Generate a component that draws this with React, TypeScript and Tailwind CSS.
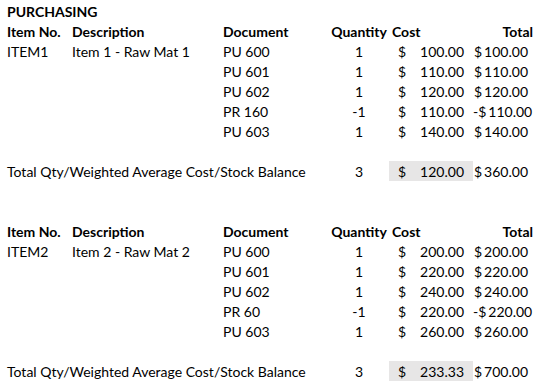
import React from 'react';

type Line = { doc: string; qty: number; cost: string; total: string };
type Item = { no: string; desc: string; lines: Line[]; qty: number; avg: string; total: string };

const items: Item[] = [
  {
    no: 'ITEM1',
    desc: 'Item 1 - Raw Mat 1',
    lines: [
      { doc: 'PU 600', qty: 1, cost: '100.00', total: '$100.00' },
      { doc: 'PU 601', qty: 1, cost: '110.00', total: '$110.00' },
      { doc: 'PU 602', qty: 1, cost: '120.00', total: '$120.00' },
      { doc: 'PR 160', qty: -1, cost: '110.00', total: '-$110.00' },
      { doc: 'PU 603', qty: 1, cost: '140.00', total: '$140.00' },
    ],
    qty: 3,
    avg: '120.00',
    total: '$360.00',
  },
  {
    no: 'ITEM2',
    desc: 'Item 2 - Raw Mat 2',
    lines: [
      { doc: 'PU 600', qty: 1, cost: '200.00', total: '$200.00' },
      { doc: 'PU 601', qty: 1, cost: '220.00', total: '$220.00' },
      { doc: 'PU 602', qty: 1, cost: '240.00', total: '$240.00' },
      { doc: 'PR 60', qty: -1, cost: '220.00', total: '-$220.00' },
      { doc: 'PU 603', qty: 1, cost: '260.00', total: '$260.00' },
    ],
    qty: 3,
    avg: '233.33',
    total: '$700.00',
  },
];

// excel-ish rows: 20px tall, text sits 1px low in the cell
const row =
  'grid grid-cols-[65px_151px_109px_60px_84px_64px] h-[20px] leading-[20px] whitespace-nowrap *:h-[20px] *:pt-[1px]';

function Money({ value }: { value: string }) {
  const neg = value.startsWith('-');
  const num = value.replace('-', '').replace('$', '');
  return (
    <div className="text-right pr-[9px]">
      {neg ? '-' : ''}$<span className="ml-[2px]">{num}</span>
    </div>
  );
}

function CostCell({ value, shaded }: { value: string; shaded?: boolean }) {
  return (
    <div className={`flex justify-between pl-[9px] pr-[9px] ${shaded ? 'bg-[#e7e6e6]' : ''}`}>
      <span>$</span>
      <span>{value}</span>
    </div>
  );
}

function Header() {
  return (
    <div className={`${row} font-bold`}>
      <div className="pl-[3px]">Item No.</div>
      <div className="pl-[3px]">Description</div>
      <div className="pl-[3px]">Document</div>
      <div className="text-center">Quantity</div>
      <div className="pl-[3px]">Cost</div>
      <div className="text-right pr-[4px]">Total</div>
    </div>
  );
}

function Block({ item }: { item: Item }) {
  return (
    <div>
      <Header />
      {item.lines.map((l, i) => (
        <div key={i} className={row}>
          <div className="pl-[3px]">{i === 0 ? item.no : ''}</div>
          <div className="pl-[3px]">{i === 0 ? item.desc : ''}</div>
          <div className="pl-[3px]">{l.doc}</div>
          <div className="text-center">{l.qty}</div>
          <CostCell value={l.cost} />
          <Money value={l.total} />
        </div>
      ))}
      <div className="h-[20px]" />
      <div className={row}>
        <div className="col-span-3 pl-[3px]">Total Qty/Weighted Average Cost/Stock Balance</div>
        <div className="text-center">{item.qty}</div>
        <CostCell value={item.avg} shaded />
        <Money value={item.total} />
      </div>
    </div>
  );
}

export default function App() {
  return (
    <div className="w-[542px] h-[391px] bg-white text-black font-[Lato,sans-serif] text-[14px] pt-[1px] pl-[4px] overflow-hidden">
      <div className={`${row} font-bold`}>
        <div className="pl-[3px]">PURCHASING</div>
      </div>
      <Block item={items[0]} />
      <div className="h-[40px]" />
      <Block item={items[1]} />
    </div>
  );
}
